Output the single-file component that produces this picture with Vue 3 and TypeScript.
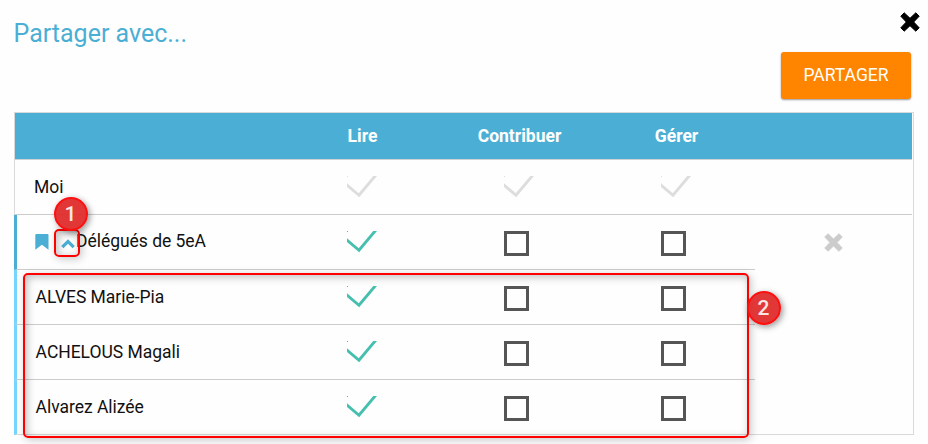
<script setup lang="ts">
type Mark = 'locked' | 'checked' | 'empty'

interface ShareRow {
  name: string
  kind: 'self' | 'group' | 'member'
  marks: Mark[]
}

const columns: string[] = ['Lire', 'Contribuer', 'Gérer']

const rows: ShareRow[] = [
  { name: 'Moi', kind: 'self', marks: ['locked', 'locked', 'locked'] },
  { name: 'Délégués de 5eA', kind: 'group', marks: ['checked', 'empty', 'empty'] },
  { name: 'ALVES Marie-Pia', kind: 'member', marks: ['checked', 'empty', 'empty'] },
  { name: 'ACHELOUS Magali', kind: 'member', marks: ['checked', 'empty', 'empty'] },
  { name: 'Alvarez Alizée', kind: 'member', marks: ['checked', 'empty', 'empty'] },
]
</script>

<template>
  <main class="dialog">
    <header class="top">
      <h1 class="title">Partager avec...</h1>
      <button class="close" aria-label="Fermer">
        <svg width="20" height="20" viewBox="0 0 20 20">
          <path d="M4.2 0.8 10 6.3 15.8 0.8 19.2 4.2 13.7 10 19.2 15.8 15.8 19.2 10 13.7 4.2 19.2 0.8 15.8 6.3 10 0.8 4.2Z" fill="#000" stroke="#000" stroke-width="1" stroke-linejoin="round" />
        </svg>
      </button>
    </header>
    <div class="actions">
      <button class="share">PARTAGER</button>
    </div>

    <section class="table">
      <div class="row head">
        <span></span>
        <span v-for="column in columns" :key="column" class="heading">{{ column }}</span>
        <span></span>
      </div>
      <div v-for="row in rows" :key="row.name" class="row" :class="row.kind">
        <div class="cell name">
          <template v-if="row.kind === 'group'">
            <svg class="bookmark" width="14" height="16" viewBox="0 0 14 16">
              <path d="M1.4 0H12.4Q13.5 0 13.5 1.1V15.7L6.9 10.8 0.3 15.7V1.1Q0.3 0 1.4 0Z" fill="#4bafd5" />
            </svg>
            <svg class="chevron" width="14" height="10" viewBox="0 0 14 10">
              <path d="M1.3 8.2 7 2.5 12.7 8.2" fill="none" stroke="#4bafd5" stroke-width="3.2" />
            </svg>
          </template>
          <span class="label">{{ row.name }}</span>
        </div>
        <div v-for="(mark, index) in row.marks" :key="index" class="cell right">
          <i v-if="mark === 'empty'" class="box"></i>
          <svg v-else class="tick" :class="mark" width="30" height="22" viewBox="0 0 30 22">
            <path d="M-2 7.4 12 19.3 29.8 -2" fill="none" stroke="currentColor" stroke-width="2.9" />
            <rect width="1" height="1" fill="currentColor" />
          </svg>
        </div>
        <div class="cell remove">
          <svg v-if="row.kind === 'group'" width="19" height="19" viewBox="0 0 20 20">
            <path d="M4.2 0.8 10 6.3 15.8 0.8 19.2 4.2 13.7 10 19.2 15.8 15.8 19.2 10 13.7 4.2 19.2 0.8 15.8 6.3 10 0.8 4.2Z" fill="#ccc" stroke="#ccc" stroke-width="1" stroke-linejoin="round" />
          </svg>
        </div>
      </div>
    </section>

    <div class="frame frame-small"></div>
    <div class="frame frame-large"></div>
    <div class="badge badge-one">1</div>
    <div class="badge badge-two">2</div>
  </main>
</template>

<style>
body {
  background: #fff;
}
</style>

<style scoped>
.dialog {
  position: relative;
  box-sizing: border-box;
  width: 928px;
  height: 444px;
  padding: 12px 14px 9px;
  overflow: hidden;
  background: #fefefe;
  color: #111;
  font-family: Roboto, "Liberation Sans", sans-serif;
  font-size: 17.5px;
}
.top {
  display: flex;
  justify-content: space-between;
  height: 40px;
  margin-right: -6px;
}
.title {
  margin: 4px 0 0 -0.5px;
  color: #4bafd5;
  font-size: 25px;
  font-weight: 400;
  line-height: 36px;
}
button {
  border: 0;
  padding: 0;
  font-family: inherit;
}
.close {
  height: 20px;
  background: none;
}
.close svg {
  display: block;
}
.actions {
  display: flex;
  justify-content: flex-end;
  height: 60px;
  padding-right: 3px;
}
.share {
  width: 130px;
  height: 47px;
  padding-bottom: 2px;
  border-radius: 3px;
  background: #ff8500;
  box-shadow: 0 1px 2px rgba(0, 0, 0, 0.4);
  color: #fff;
  font-size: 17.5px;
}
.table {
  box-sizing: border-box;
  width: 900px;
  height: 323px;
  border: 1px solid #d9d9d9;
}
.row {
  box-sizing: border-box;
  display: grid;
  grid-template-columns: 269px repeat(3, 157px) 157px;
  width: 897px;
  height: 55px;
}
.head {
  height: 47px;
  align-items: center;
  border-bottom: 1px solid #cfd2d3;
  background: #4bafd5;
  color: #fff;
  font-weight: 700;
  text-align: center;
}
.heading {
  padding-bottom: 1px;
}
.cell {
  box-sizing: border-box;
  display: flex;
  border-bottom: 1px solid #ccc;
}
.name {
  align-items: center;
  padding-left: 19px;
}
.group .name,
.member .name {
  margin-left: -1px;
  border-left: 3px solid #4bafd5;
  padding-left: 18px;
}
.member .name {
  border-left-color: #75d5ff;
  padding-left: 18.6px;
}
.row:last-child .cell {
  border-bottom-color: transparent;
}
.label {
  line-height: 24px;
  letter-spacing: -0.03px;
  white-space: nowrap;
}
.group .label {
  padding: 0 0 2px 1px;
}
.bookmark {
  margin-right: 12px;
}
.chevron {
  margin-top: 4px;
}
.right {
  padding: 16px 0 0 63px;
}
.box {
  box-sizing: border-box;
  width: 25px;
  height: 25px;
  border: 3px solid #555;
}
.tick {
  overflow: hidden;
}
.locked {
  color: #ddd;
}
.checked {
  color: #46bfaf;
}
.remove {
  align-items: center;
  justify-content: center;
}
.group .remove,
.member .remove {
  border-bottom-color: transparent;
}
.frame {
  position: absolute;
  box-sizing: border-box;
  border: 2px solid #f00;
  border-radius: 5px;
  box-shadow: 2px 2px 8px rgba(0, 0, 0, 0.22), inset 2px 2px 8px rgba(0, 0, 0, 0.26);
}
.frame-small {
  left: 54px;
  top: 229px;
  width: 26px;
  height: 28px;
}
.frame-large {
  left: 23px;
  top: 273px;
  width: 726px;
  height: 165px;
}
.badge {
  position: absolute;
  box-sizing: border-box;
  display: flex;
  align-items: center;
  justify-content: center;
  width: 34px;
  height: 34px;
  border: 2px solid #fc1010;
  border-radius: 50%;
  background: rgba(224, 40, 40, 0.93);
  box-shadow: 2px 2px 6px rgba(0, 0, 0, 0.4);
  color: #fbe5e5;
  font-family: Roboto, sans-serif;
  font-size: 21px;
  font-weight: 500;
}
.badge-one {
  left: 53.5px;
  top: 196.5px;
}
.badge-two {
  left: 746.5px;
  top: 290.5px;
}
</style>
